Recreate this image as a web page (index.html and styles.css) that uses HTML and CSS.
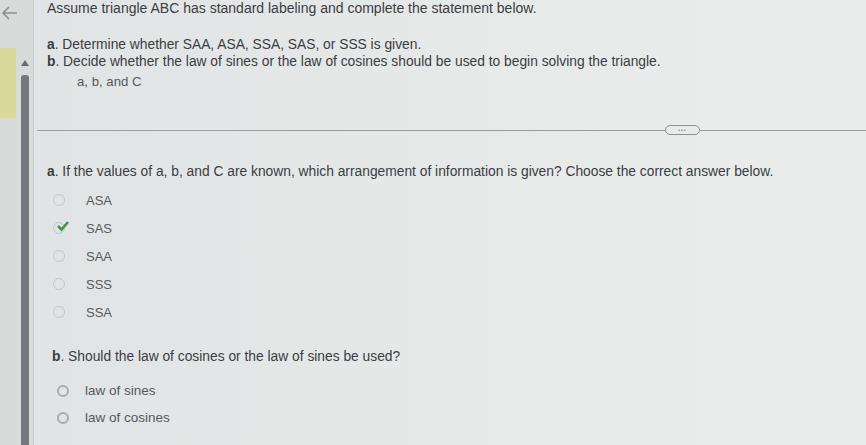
FILE: index.html
```html
<!DOCTYPE html>
<html lang="en">
<head>
    <meta charset="UTF-8">
    <title>Law of sines or cosines</title>
    <link rel="stylesheet" href="styles.css">
</head>
<body>
<div class="page">
    <!-- barra lateral -->
    <div class="rail">
        <svg class="back" width="20" height="20" viewBox="0 0 20 20">
            <path d="M17 10H3M9 4L3 10l6 6" fill="none" stroke="#8a8f90" stroke-width="1.6"/>
        </svg>
        <div class="rail-body">
            <div class="flag"></div>
            <div class="scroll">
                <div class="scroll-up"></div>
                <div class="scroll-thumb"></div>
            </div>
        </div>
    </div>

    <div class="main">
        <p class="intro">Assume triangle ABC has standard labeling and complete the statement below.</p>
        <div class="steps">
            <div><b>a</b>. Determine whether SAA, ASA, SSA, SAS, or SSS is given.</div>
            <div><b>b</b>. Decide whether the law of sines or the law of cosines should be used to begin solving the triangle.</div>
        </div>
        <div class="given">a, b, and C</div>

        <div class="divider">
            <span class="line"></span>
            <span class="more">&bull;&bull;&bull;</span>
            <span class="line"></span>
        </div>

        <div class="question q-a"><b>a</b>. If the values of a, b, and C are known, which arrangement of information is given? Choose the correct answer below.</div>
        <ul class="options opts-a">
            <li><span class="radio"></span>ASA</li>
            <li><span class="radio checked"><svg width="14" height="12" viewBox="0 0 14 12"><path d="M2 6l3.5 3.5L12 2" fill="none" stroke="#3a9a4a" stroke-width="2.6"/></svg></span>SAS</li>
            <li><span class="radio"></span>SAA</li>
            <li><span class="radio"></span>SSS</li>
            <li><span class="radio"></span>SSA</li>
        </ul>

        <div class="question q-b"><b>b</b>. Should the law of cosines or the law of sines be used?</div>
        <ul class="options opts-b">
            <li><span class="radio dark"></span>law of sines</li>
            <li><span class="radio dark"></span>law of cosines</li>
        </ul>
    </div>
</div>
</body>
</html>
```

FILE: styles.css
```css
/* Estilos principales */
body {
    margin: 0;
    font-family: "Liberation Sans", Arial, sans-serif;
    color: #3b3d3f;
    background: #e3e6e6;
}
.page {
    display: flex;
    height: 445px;
    overflow: hidden;
}
.rail {
    width: 33px;
    flex: none;
    background: #d7dbda;
    border-right: 1px solid #c9cdcc;
    display: flex;
    flex-direction: column;
}
.back {
    margin: 3px 0 0 0;
}
.rail-body {
    display: flex;
    margin-top: 25px;
    flex: 1;
}
.flag {
    width: 16px;
    height: 70px;
    background: #d9d99c;
}
.scroll {
    margin-left: 4px;
    width: 9px;
    display: flex;
    flex-direction: column;
    align-items: center;
}
.scroll-up {
    width: 0;
    height: 0;
    border-left: 4px solid transparent;
    border-right: 4px solid transparent;
    border-bottom: 6px solid #666b6e;
    margin-top: 12px;
}
.scroll-thumb {
    width: 8px;
    flex: 1;
    margin-top: 9px;
    background: #75797c;
    border-radius: 3px 3px 0 0;
}
.main {
    flex: 1;
    padding-left: 13px;
    background: linear-gradient(90deg, #e1e4e4, #e8eaea 60%, #ebeded);
}
.intro {
    margin: 0;
    font-size: 14px;
    line-height: 16px;
}
.steps {
    margin-top: 20px;
    font-size: 13.8px;
    line-height: 17px;
}
.given {
    margin: 4px 0 0 30px;
    font-size: 13.2px;
    line-height: 16px;
    color: #55595b;
}
.divider {
    display: grid;
    grid-template-columns: 1fr auto 166px;
    align-items: center;
    margin: 35px 0 0 -10px;
}
.line {
    height: 1px;
    background: #9a9ea0;
}
.more {
    width: 33px;
    height: 8px;
    border: 1px solid #8d9193;
    border-radius: 5px;
    font-size: 5px;
    line-height: 8px;
    text-align: center;
    color: #7a7e80;
    letter-spacing: 1px;
}
.question {
    font-size: 13.8px;
    line-height: 16px;
}
.q-a {
    margin-top: 29px;
}
.q-b {
    margin: 23px 0 0 5px;
}
.options {
    list-style: none;
    margin: 0;
    padding: 0;
    font-size: 13px;
    color: #55595b;
}
.options li {
    display: flex;
    align-items: center;
    height: 28px;
}
.opts-a {
    margin-top: 6px;
}
.opts-a li {
    padding-left: 6px;
}
.opts-b {
    margin-top: 12px;
    font-size: 13.5px;
}
.opts-b li {
    height: 27px;
    padding-left: 10px;
}
.radio {
    width: 10px;
    height: 10px;
    border: 1px solid #c3c7c7;
    border-radius: 50%;
    margin-right: 21px;
    position: relative;
    flex: none;
}
.radio.dark {
    border: 2px solid #a7acae;
    width: 8px;
    height: 8px;
    margin-right: 16px;
}
.radio svg {
    position: absolute;
    left: 2px;
    top: -3px;
}
```
